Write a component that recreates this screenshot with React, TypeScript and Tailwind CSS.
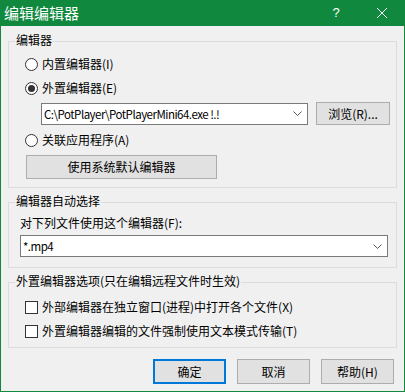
import React from "react";

function Group({ label, className, children }: { label: string; className?: string; children: React.ReactNode }) {
  return (
    <div className={`relative border border-[#dcdcdc] ${className ?? ""}`}>
      {/* group caption sits on top of the border */}
      <span className="absolute -top-[10px] left-[6px] bg-[#f0f0f0] px-[1px] leading-[16px]">{label}</span>
      {children}
    </div>
  );
}

function Radio({ checked, label }: { checked?: boolean; label: string }) {
  return (
    <div className="flex h-[24px] items-center gap-[4px]">
      <span className="flex h-[13px] w-[13px] items-center justify-center rounded-full border border-[#333333] bg-white">
        {checked && <span className="h-[7px] w-[7px] rounded-full bg-[#333333]" />}
      </span>
      <span>{label}</span>
    </div>
  );
}

function Check({ label }: { label: string }) {
  return (
    <div className="flex h-[24px] items-center gap-[4px]">
      <span className="h-[13px] w-[13px] border border-[#333333] bg-white" />
      <span>{label}</span>
    </div>
  );
}

function Chevron() {
  return (
    <svg width="9" height="5" viewBox="0 0 9 5" className="shrink-0">
      <polyline points="0.5,0.5 4.5,4.5 8.5,0.5" fill="none" stroke="#555555" strokeWidth="1" />
    </svg>
  );
}

function Combo({ value, className }: { value: string; className?: string }) {
  return (
    <div className={`flex h-[22px] items-center border border-[#7a7a7a] bg-white pl-[2px] pr-[5px] ${className ?? ""}`}>
      <span className="flex-1 truncate text-[11.5px] tracking-[-0.5px]">{value}</span>
      <Chevron />
    </div>
  );
}

function Button({ children, primary, className }: { children: React.ReactNode; primary?: boolean; className?: string }) {
  return (
    <div
      className={`flex items-center justify-center bg-[#e1e1e1] ${
        primary ? "border-2 border-[#0078d7]" : "border border-[#adadad]"
      } ${className ?? ""}`}
    >
      {children}
    </div>
  );
}

export default function App() {
  return (
    <div className="flex h-[392px] w-[405px] flex-col bg-[#f0f0f0] font-['Noto_Sans_CJK_SC','Noto_Sans',sans-serif] text-[12px] leading-[16px] text-black">
      {/* Title bar */}
      <div className="flex h-[26px] shrink-0 items-center bg-[#10893e] text-white">
        <span className="flex-1 pl-[4px] text-[15px] leading-[20px]">编辑编辑器</span>
        <div className="flex h-full w-[46px] items-center justify-center font-['Liberation_Sans',sans-serif] text-[13px]">?</div>
        <div className="flex h-full w-[46px] items-center justify-center">
          <svg width="10" height="10" viewBox="0 0 10 10">
            <line x1="0" y1="0" x2="10" y2="10" stroke="white" strokeWidth="1" />
            <line x1="10" y1="0" x2="0" y2="10" stroke="white" strokeWidth="1" />
          </svg>
        </div>
      </div>

      {/* Body */}
      <div className="flex flex-1 flex-col border-x border-b border-[#10893e] px-[7px]">
        <Group label="编辑器" className="mt-[15px] h-[147px] pl-[16px] pt-[10px]">
          <Radio label="内置编辑器(I)" />
          <Radio checked label="外置编辑器(E)" />
          <div className="ml-[16px] mt-[2px] flex h-[23px] items-center gap-[8px]">
            <Combo value={"C:\\PotPlayer\\PotPlayerMini64.exe !.!"} className="w-[267px]" />
            <Button className="h-[23px] w-[74px]">浏览(R)...</Button>
          </div>
          <div className="mt-[3px]">
            <Radio label="关联应用程序(A)" />
          </div>
          <Button className="ml-[1px] mt-[3px] h-[24px] w-[191px]">使用系统默认编辑器</Button>
        </Group>

        <Group label="编辑器自动选择" className="mt-[14px] h-[66px] pl-[11px] pt-[12px]">
          <div className="leading-[16px]">对下列文件使用这个编辑器(F):</div>
          <Combo value="*.mp4" className="mt-[4px] w-[368px]" />
        </Group>

        <Group label="外置编辑器选项(只在编辑远程文件时生效)" className="mt-[14px] h-[66px] pl-[16px] pt-[12px]">
          <Check label="外部编辑器在独立窗口(进程)中打开各个文件(X)" />
          <Check label="外置编辑器编辑的文件强制使用文本模式传输(T)" />
        </Group>

        <div className="mt-[11px] flex justify-end gap-[11px] pr-[3px]">
          <Button primary className="h-[25px] w-[73px]">确定</Button>
          <Button className="h-[25px] w-[73px]">取消</Button>
          <Button className="h-[25px] w-[73px]">帮助(H)</Button>
        </div>
      </div>
    </div>
  );
}
